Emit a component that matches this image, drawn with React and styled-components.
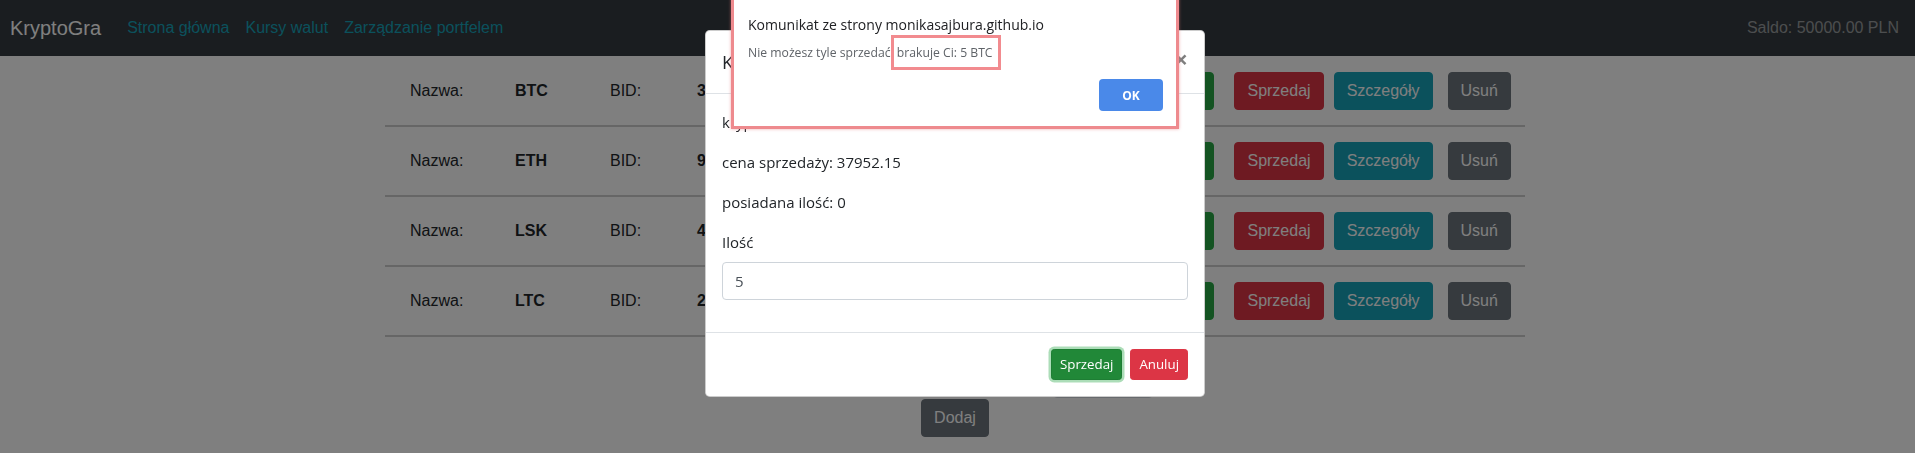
import React from "react";
import styled, { createGlobalStyle, css } from "styled-components";

const GlobalStyle = createGlobalStyle`
  * { box-sizing: border-box; }
  html, body { margin: 0; padding: 0; background: #fff; }
  body {
    font-family: "Liberation Sans", Arial, sans-serif;
    font-size: 16px;
    color: #212529;
    overflow: hidden;
  }
`;

const Navbar = styled.nav`
  height: 56px;
  background: #343a40;
  display: flex;
  align-items: center;
  padding: 0 16px 0 10px;
`;

const Brand = styled.span`
  color: #fff;
  font-size: 20px;
  line-height: 30px;
  margin-right: 18px;
`;

const NavLink = styled.a`
  color: #17a2b8;
  font-size: 16px;
  line-height: 24px;
  padding: 8px;
  text-decoration: none;
`;

const NavText = styled.span`
  margin-left: auto;
  color: rgba(255, 255, 255, 0.5);
  font-size: 16px;
  line-height: 24px;
`;

const Main = styled.main`
  padding-right: 5px;
`;

const List = styled.div`
  width: 1140px;
  margin: 0 auto;
  padding-top: 1px;
`;

const Row = styled.div`
  display: flex;
  align-items: center;
  padding: 15px 15px 15px 25px;
  border-bottom: 2px solid #cccccc;
`;

const Cell = styled.span`
  flex: 0 0 ${(p) => p.$w}px;
  font-weight: ${(p) => (p.$bold ? 700 : 400)};
  line-height: 24px;
`;

const variants = {
  success: css`background: #28a745; border-color: #28a745;`,
  danger: css`background: #dc3545; border-color: #dc3545;`,
  info: css`background: #17a2b8; border-color: #17a2b8;`,
  secondary: css`background: #6c757d; border-color: #6c757d;`,
};

const Btn = styled.button`
  font-family: "Liberation Sans", Arial, sans-serif;
  font-size: 16px;
  line-height: 24px;
  padding: 6px 12px;
  border: 1px solid transparent;
  border-radius: 4px;
  color: #fff;
  margin-left: ${(p) => p.$ml || 0}px;
  ${(p) => variants[p.$v]}
`;

const FormRow = styled.div`
  display: flex;
  justify-content: center;
  align-items: center;
  gap: 10px;
  margin-top: 23px;
`;

const FormLabel = styled.span`
  flex: 0 0 286px;
  line-height: 24px;
  text-align: right;
`;

const TextInput = styled.input`
  width: ${(p) => p.$w}px;
  height: 38px;
  padding: 6px 12px;
  border: 1px solid #ced4da;
  border-radius: 4px;
  font-family: "Liberation Sans", Arial, sans-serif;
  font-size: 16px;
`;

const AddRow = styled.div`
  display: flex;
  justify-content: center;
  margin-top: 1px;
`;

const Backdrop = styled.div`
  position: fixed;
  inset: 0;
  background: rgba(0, 0, 0, 0.5);
`;

const ModalLayer = styled.div`
  position: fixed;
  inset: 0;
  padding-right: 5px;
  overflow: hidden;
`;

const ModalDialog = styled.div`
  width: 500px;
  margin: 30px auto 0;
  background: #fff;
  border: 1px solid rgba(0, 0, 0, 0.2);
  border-radius: 4.8px;
  font-family: "Open Sans", "Noto Sans", sans-serif;
  font-size: 15px;
  color: #212529;
`;

const ModalHeader = styled.div`
  display: flex;
  align-items: flex-start;
  padding: 16px;
  border-bottom: 1px solid #dee2e6;
`;

const ModalTitle = styled.h5`
  margin: 0;
  font-size: 18.5px;
  font-weight: 500;
  line-height: 30px;
`;

const CloseBtn = styled.button`
  margin: -16px -16px -16px auto;
  padding: 16px;
  background: transparent;
  border: 0;
  font-family: "Open Sans", sans-serif;
  font-size: 24px;
  font-weight: 700;
  line-height: 1;
  color: #000;
  opacity: 0.5;
`;

const ModalBody = styled.div`
  padding: 16px;
`;

const P = styled.p`
  margin: 0 0 16px;
  line-height: 24px;
`;

const FormGroup = styled.div`
  margin-bottom: 16px;
`;

const Label = styled.label`
  display: block;
  margin-bottom: 8px;
  line-height: 24px;
`;

const ModalInput = styled.input`
  display: block;
  width: 100%;
  height: 38px;
  padding: 6px 12px;
  border: 1px solid #ced4da;
  border-radius: 4px;
  font-family: "Open Sans", sans-serif;
  font-size: 15px;
  color: #495057;
`;

const ModalFooter = styled.div`
  display: flex;
  justify-content: flex-end;
  align-items: center;
  padding: 12px;
  border-top: 1px solid #dee2e6;
`;

const SmBtn = styled.button`
  margin: 4px;
  font-family: "Open Sans", sans-serif;
  font-size: 13.3px;
  line-height: 21px;
  padding: 4px 8px;
  border: 1px solid transparent;
  border-radius: 3.2px;
  color: #fff;
  ${(p) =>
    p.$focus
      ? css`
          background: #218838;
          border-color: #1e7e34;
          box-shadow: 0 0 0 2.5px rgba(72, 180, 97, 0.45);
        `
      : variants[p.$v]}
`;

const AlertLayer = styled.div`
  position: fixed;
  top: -20px;
  left: 0;
  right: 0;
  padding-right: 5px;
  display: flex;
  justify-content: center;
`;

const AlertBox = styled.div`
  width: 448px;
  background: #fff;
  border: 3px solid #ee8a8e;
  box-shadow: 0 0 3px rgba(230, 120, 124, 0.6);
  padding: 32px 13px 15px 14px;
  font-family: "Open Sans", "Noto Sans", sans-serif;
`;

const AlertTitle = styled.div`
  font-size: 14px;
  line-height: 20px;
  color: #202124;
`;

const AlertMessage = styled.div`
  margin-top: 10px;
  font-size: 12.2px;
  line-height: 16px;
  color: #5f6368;
`;

const Highlight = styled.span`
  position: relative;
  &::after {
    content: "";
    position: absolute;
    top: -9px;
    bottom: -9px;
    left: -6px;
    right: -8px;
    border: 3px solid #f28b8f;
  }
`;

const AlertActions = styled.div`
  display: flex;
  justify-content: flex-end;
  margin-top: 18px;
`;

const OkBtn = styled.button`
  width: 64px;
  height: 32px;
  border: 0;
  border-radius: 4px;
  background: #4a89e9;
  color: #fff;
  font-family: "Open Sans", sans-serif;
  font-size: 12px;
  font-weight: 700;
`;

const coins = [
  { name: "BTC", bid: "37952.15", ask: "38105.40" },
  { name: "ETH", bid: "9065.302", ask: "9112.480" },
  { name: "LSK", bid: "4.8821", ask: "4.9310" },
  { name: "LTC", bid: "205.6711", ask: "207.1200" },
];

export default function App() {
  return (
    <>
      <GlobalStyle />
      <Navbar>
        <Brand>KryptoGra</Brand>
        <NavLink href="#">Strona główna</NavLink>
        <NavLink href="#">Kursy walut</NavLink>
        <NavLink href="#">Zarządzanie portfelem</NavLink>
        <NavText>Saldo: 50000.00 PLN</NavText>
      </Navbar>
      <Main>
        <List>
          {coins.map((c) => (
            <Row key={c.name}>
              <Cell $w={105}>Nazwa:</Cell>
              <Cell $w={95} $bold>{c.name}</Cell>
              <Cell $w={87}>BID:</Cell>
              <Cell $w={110} $bold>{c.bid}</Cell>
              <Cell $w={87}>ASK:</Cell>
              <Cell $w={110} $bold>{c.ask}</Cell>
              <Btn $v="success" $ml={156}>Kup</Btn>
              <Btn $v="danger" $ml={20}>Sprzedaj</Btn>
              <Btn $v="info" $ml={10}>Szczegóły</Btn>
              <Btn $v="secondary" $ml={15}>Usuń</Btn>
            </Row>
          ))}
        </List>
        <FormRow>
          <FormLabel>Nazwa kryptowaluty:</FormLabel>
          <TextInput $w={100} placeholder="" />
        </FormRow>
        <AddRow>
          <Btn $v="secondary">Dodaj</Btn>
        </AddRow>
      </Main>

      <Backdrop />
      <ModalLayer>
        <ModalDialog>
          <ModalHeader>
            <ModalTitle>Kryptowaluta BTC</ModalTitle>
            <CloseBtn>×</CloseBtn>
          </ModalHeader>
          <ModalBody>
            <P>kryptowaluta: BTC</P>
            <P>cena sprzedaży: 37952.15</P>
            <P>posiadana ilość: 0</P>
            <FormGroup>
              <Label>Ilość</Label>
              <ModalInput defaultValue="5" />
            </FormGroup>
          </ModalBody>
          <ModalFooter>
            <SmBtn $focus>Sprzedaj</SmBtn>
            <SmBtn $v="danger">Anuluj</SmBtn>
          </ModalFooter>
        </ModalDialog>
      </ModalLayer>

      <AlertLayer>
        <AlertBox>
          <AlertTitle>Komunikat ze strony monikasajbura.github.io</AlertTitle>
          <AlertMessage>
            Nie możesz tyle sprzedać, <Highlight>brakuje Ci: 5 BTC</Highlight>
          </AlertMessage>
          <AlertActions>
            <OkBtn>OK</OkBtn>
          </AlertActions>
        </AlertBox>
      </AlertLayer>
    </>
  );
}
